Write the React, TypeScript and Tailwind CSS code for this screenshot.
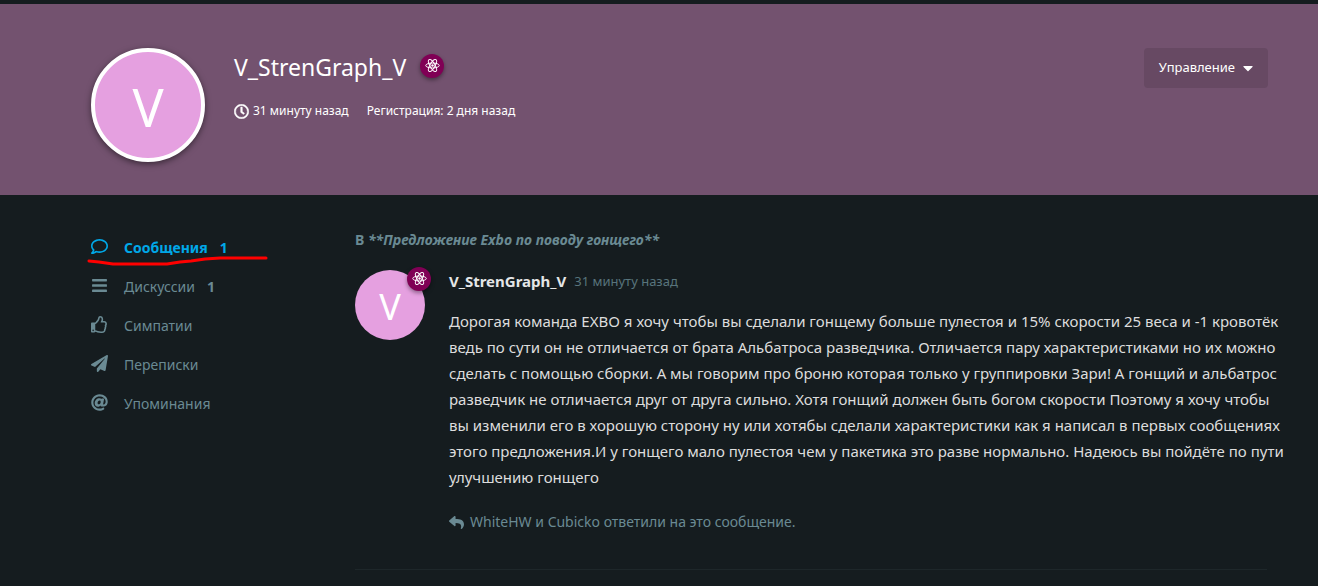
import React from 'react';
import type { IconType } from 'react-icons';
import {
  FaAt,
  FaBars,
  FaCaretDown,
  FaPaperPlane,
  FaRegClock,
  FaRegComment,
  FaRegThumbsUp,
  FaReply,
} from 'react-icons/fa';

interface NavItem {
  label: string;
  icon: IconType;
  count?: number;
  active?: boolean;
}

const navItems: NavItem[] = [
  { label: 'Сообщения', icon: FaRegComment, count: 1, active: true },
  { label: 'Дискуссии', icon: FaBars, count: 1 },
  { label: 'Симпатии', icon: FaRegThumbsUp },
  { label: 'Переписки', icon: FaPaperPlane },
  { label: 'Упоминания', icon: FaAt },
];

const postLines = [
  'Дорогая команда EXBO я хочу чтобы вы сделали гонщему больше пулестоя и 15% скорости 25 веса и -1 кровотёк',
  'ведь по сути он не отличается от брата Альбатроса разведчика. Отличается пару характеристиками но их можно',
  'сделать с помощью сборки. А мы говорим про броню которая только у группировки Зари! А гонщий и альбатрос',
  'разведчик не отличается друг от друга сильно. Хотя гонщий должен быть богом скорости Поэтому я хочу чтобы',
  'вы изменили его в хорошую сторону ну или хотябы сделали характеристики как я написал в первых сообщениях',
  'этого предложения.И у гонщего мало пулестоя чем у пакетика это разве нормально. Надеюсь вы пойдёте по пути',
  'улучшению гонщего',
];

const Badge: React.FC = () => (
  <span className="flex h-6 w-6 items-center justify-center rounded-full bg-[#800055] text-white shadow-[0_2px_4px_rgba(0,0,0,0.4)]">
    <svg
      className="mb-0.5 h-[15px] w-[15px]"
      viewBox="0 0 30 30"
      fill="none"
      stroke="currentColor"
      strokeWidth="2"
    >
      <ellipse cx="15" cy="15" rx="13.5" ry="5" />
      <ellipse cx="15" cy="15" rx="13.5" ry="5" transform="rotate(60 15 15)" />
      <ellipse cx="15" cy="15" rx="13.5" ry="5" transform="rotate(120 15 15)" />
      <circle cx="15" cy="15" r="2.4" fill="currentColor" stroke="none" />
    </svg>
  </span>
);

const ProfileHeader: React.FC = () => (
  <header className="flex items-start bg-[#73526f] pt-11 pr-[50px] pb-[33px] pl-[91px] text-white">
    <div className="flex h-[114px] w-[114px] shrink-0 items-center justify-center rounded-full border-4 border-white bg-[#e5a0e0] pt-1 text-[52px] leading-none shadow-[0_2px_6px_rgba(0,0,0,0.5)]">
      V
    </div>
    <div className="ml-[29px] grow">
      <div className="flex h-[38px] items-center">
        <h1 className="text-[23px]">V_StrenGraph_V</h1>
        <div className="mb-0.5 ml-[14px]">
          <Badge />
        </div>
      </div>
      <ul className="mt-[14px] flex items-center gap-[18px] text-[12px] leading-[22px]">
        <li className="flex items-center gap-1">
          <FaRegClock className="h-[15px] w-[15px]" stroke="currentColor" strokeWidth="16" />
          31 минуту назад
        </li>
        <li>Регистрация: 2 дня назад</li>
      </ul>
    </div>
    <button
      type="button"
      className="flex h-10 shrink-0 items-center gap-2 rounded bg-[#674963] px-[15px] text-[13px]"
    >
      Управление
      <FaCaretDown className="h-4 w-[10px]" />
    </button>
  </header>
);

const SideNav: React.FC = () => (
  <nav className="w-[264px] shrink-0 pt-[33px]">
    <ul>
      {navItems.map(({ label, icon: Icon, count, active }) => (
        <li key={label} className="relative">
          <a
            href="#"
            className={
              active
                ? 'flex h-[39px] items-center text-sm font-bold text-[#00a8e8]'
                : 'flex h-[39px] items-center text-sm text-[#6a8a93]'
            }
          >
            <Icon className="mr-4 mb-0.5 h-[17px] w-[17px]" />
            {label}
            {count && <span className="ml-3 font-bold">{count}</span>}
          </a>
          {active && (
            <svg
              className="pointer-events-none absolute top-[26px] -left-1 h-3 w-[182px]"
              viewBox="0 0 182 12"
              fill="none"
              stroke="#ff0000"
              strokeWidth="3"
              strokeLinecap="round"
              strokeLinejoin="round"
            >
              <path d="M2 7L12 8L26 10H80L93 8L104 7L118 5L133 4H179" />
            </svg>
          )}
        </li>
      ))}
    </ul>
  </nav>
);

const Post: React.FC = () => (
  <main className="min-w-0 grow pt-[33px]">
    <h2 className="text-sm leading-6 font-bold text-[#6a8a93]">
      В <a href="#" className="italic">**Предложение Exbo по поводу гонщего**</a>
    </h2>
    <article className="mt-3 flex border-b border-[#1e272a] pb-[35px]">
      <div className="relative mt-[6px] h-[70px] w-[70px] shrink-0">
        <div className="flex h-full items-center justify-center rounded-full bg-[#e5a0e0] pt-1 text-4xl leading-none text-white">
          V
        </div>
        <div className="absolute -top-[3px] -right-[6px]">
          <Badge />
        </div>
      </div>
      <div className="ml-6 min-w-0 grow">
        <div className="flex items-center leading-[34px]">
          <h3 className="text-[15px] font-bold text-[#e4e6e7]">V_StrenGraph_V</h3>
          <time className="ml-2 text-[13px] text-[#58747c]">31 минуту назад</time>
        </div>
        <p className="mt-[10px] text-[15px] leading-[26px] text-[#dddddd]">
          {postLines.map((line) => (
            <span key={line} className="block whitespace-nowrap">
              {line}
            </span>
          ))}
        </p>
        <p className="mt-5 flex items-center text-sm leading-6 text-[#6a8a93]">
          <FaReply className="mr-[6px] h-[15px] w-[15px]" />
          <span>
            <a href="#">WhiteHW</a> и <a href="#">Cubicko</a> ответили на это сообщение.
          </span>
        </p>
      </div>
    </article>
  </main>
);

const App: React.FC = () => (
  <div className="min-h-screen bg-[#151c1f] pt-1 font-['Noto_Sans','Open_Sans',sans-serif]">
    <ProfileHeader />
    <div className="flex pr-[51px] pl-[91px]">
      <SideNav />
      <Post />
    </div>
  </div>
);

export default App;
